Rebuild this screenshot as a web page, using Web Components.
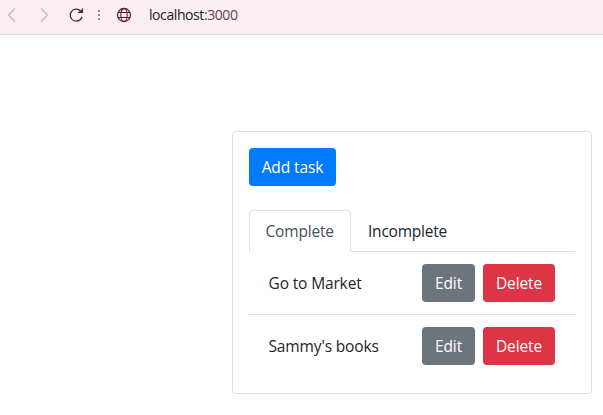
<!DOCTYPE html>
<html lang="en">
<head>
<meta charset="utf-8">
<title>Tasks</title>
<style>
body { margin: 0; background: #fff; color: #212529; font: 400 15.5px/24px "Open Sans", "Noto Sans", sans-serif; overflow: hidden; }
</style>
</head>
<body>
<browser-bar></browser-bar>
<task-card>
  <task-button slot="action" kind="primary" style="--w:87px">Add task</task-button>
  <task-tab slot="tabs" active style="--w:102px;--ls:-.18px">Complete</task-tab>
  <task-tab slot="tabs" style="--w:113px;--ls:-.22px">Incomplete</task-tab>
  <task-row>Go to Market</task-row>
  <task-row>Sammy's books</task-row>
</task-card>
<script>
const define = (name, html) => customElements.define(name, class extends HTMLElement {
  constructor() {
    super();
    this.attachShadow({ mode: "open" }).innerHTML = html;
  }
});

define("browser-bar", `<style>
:host { display: flex; box-sizing: border-box; height: 35px; background: #f9eff3; border-bottom: 1px solid #efd5dd; }
svg { display: block; flex: none; }
span { padding: 6px 0 0 9px; font-size: 14px; line-height: 18px; letter-spacing: -.42px; color: #202020; white-space: nowrap; }
i { font-style: normal; color: #6b4050; }
</style>
<svg width="140" height="34" viewBox="0 0 140 34" fill="none">
  <path d="M15 8.5 8.5 15l6.5 6.5M41 8.5l6.5 6.5-6.5 6.5" stroke="#cdb6bf" stroke-width="1.3"/>
  <g stroke="#57202f" stroke-width="1.3">
    <path d="M80.6 11A6 6 0 1 0 82 16.8"/>
    <path d="M83 8.5v4.3h-4.6z" fill="#57202f" stroke="none"/>
    <path d="M82.4 8.5v3.8h-4.4"/>
    <circle cx="124" cy="15" r="6.5"/>
    <ellipse cx="124" cy="15" rx="3.2" ry="6.5" stroke-width="1.1"/>
    <path d="M118 12.5h12M118 17.5h12" stroke-width="1"/>
  </g>
  <path d="M98 10h2v2h-2zM98 14h2v2h-2zM98 18h2v2h-2z" fill="#9b8991"/>
</svg>
<span>localhost<i>:3000</i></span>`);

define("task-button", `<style>
:host { display: block; box-sizing: border-box; width: var(--w); height: 38px; padding-top: 7px; border-radius: 4px; color: #fff; text-align: center; white-space: nowrap; letter-spacing: var(--ls, -.1px); }
:host([kind=primary]) { background: #007bff; }
:host([kind=secondary]) { background: #6c757d; }
:host([kind=danger]) { background: #dc3545; }
</style><slot></slot>`);

define("task-tab", `<style>
:host { display: block; box-sizing: border-box; width: var(--w); height: 42px; padding: 8px 0 0 16px; border: 1px solid transparent; border-radius: 4px 4px 0 0; white-space: nowrap; letter-spacing: var(--ls); }
:host([active]) { padding-left: 15.5px; color: #495057; background: #fff; border-color: #dee2e6 #dee2e6 #fff; }
</style><slot></slot>`);

define("task-row", `<style>
:host { display: flex; gap: 8px; box-sizing: border-box; height: 63px; padding: 12px 20px 0 19.5px; border-bottom: 1px solid #dfdfdf; }
:host(:last-child) { border: 0; }
div { flex: 1; padding-top: 7px; white-space: nowrap; letter-spacing: -.14px; }
</style><div><slot></slot></div>
<task-button kind="secondary" style="--w:53px">Edit</task-button>
<task-button kind="danger" style="--w:72px">Delete</task-button>`);

define("task-card", `<style>
:host { display: block; box-sizing: border-box; width: 360px; height: 263px; margin: 96px 0 0 232px; padding: 16px; border: 1px solid #dfdfdf; border-radius: 4px; }
nav { display: flex; height: 41px; margin-top: 24px; border-bottom: 1px solid #dee2e6; }
</style><slot name="action"></slot><nav><slot name="tabs"></slot></nav><slot></slot>`);
</script>
</body>
</html>
